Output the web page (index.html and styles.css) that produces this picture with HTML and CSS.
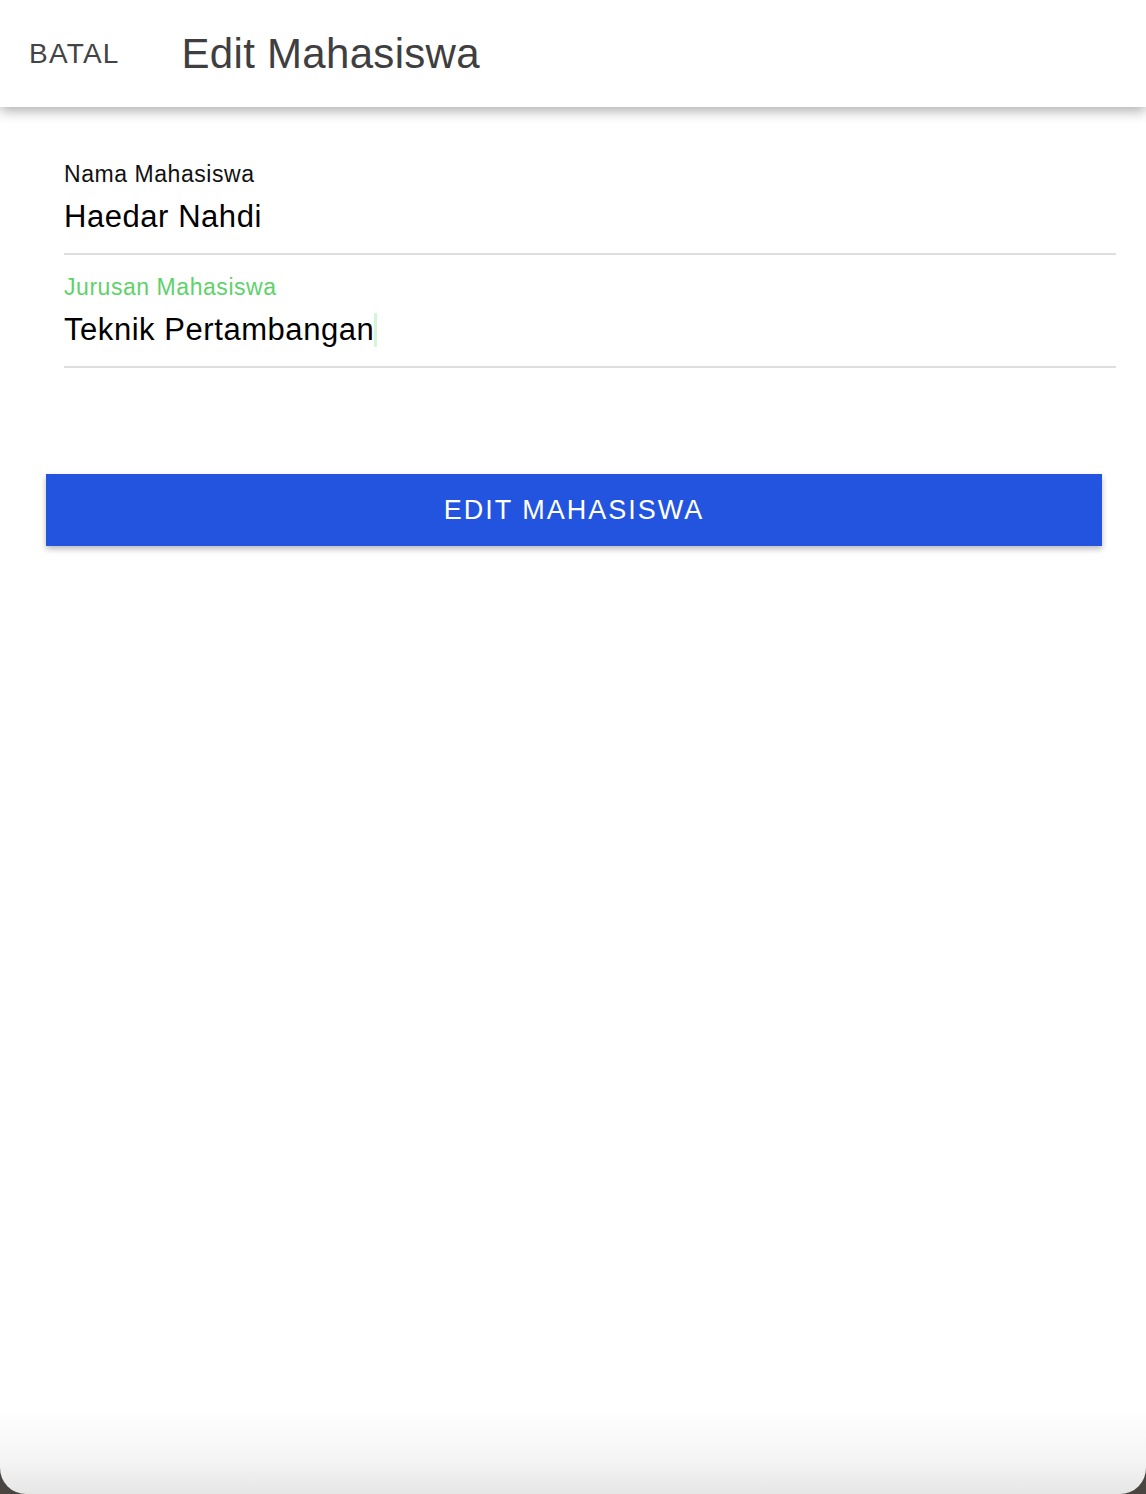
FILE: index.html
```html
<!DOCTYPE html>
<html lang="id">
<head>
<meta charset="utf-8">
<title>Edit Mahasiswa</title>
<link rel="stylesheet" href="styles.css">
</head>
<body>
<div class="screen">
  <header class="topbar">
    <span class="cancel">BATAL</span>
    <h1 class="title">Edit Mahasiswa</h1>
  </header>
  <main class="form">
    <div class="field">
      <div class="label">Nama Mahasiswa</div>
      <div class="value">Haedar Nahdi</div>
    </div>
    <div class="field">
      <div class="label label-active">Jurusan Mahasiswa</div>
      <div class="value">Teknik Pertambangan<span class="cursor"></span></div>
    </div>
  </main>
  <div class="actions">
    <button class="btn">EDIT MAHASISWA</button>
  </div>
  <div class="spacer"></div>
</div>
</body>
</html>
```
FILE: styles.css
```css
html, body {
  margin: 0;
  padding: 0;
  background: #4a4540;
}
body {
  font-family: "Liberation Sans", Arial, sans-serif;
}
.screen {
  width: 1146px;
  height: 1494px;
  background: linear-gradient(to bottom, #ffffff 0, #ffffff 1410px, #f4f4f4 1460px, #e6e6e6 1494px);
  border-radius: 0 0 26px 26px;
  overflow: hidden;
  display: flex;
  flex-direction: column;
}
.topbar {
  height: 107px;
  flex: 0 0 107px;
  display: flex;
  align-items: center;
  padding-left: 29px;
  background: #fff;
  box-shadow: 0 4px 12px rgba(0, 0, 0, 0.32);
  position: relative;
  z-index: 1;
}
.cancel {
  font-size: 28px;
  letter-spacing: 1.2px;
  color: #444;
}
.title {
  margin: 0 0 0 62px;
  font-size: 42px;
  letter-spacing: 0.3px;
  font-weight: normal;
  color: #3f3f3f;
}
.form {
  padding: 53px 30px 0 64px;
}
.field {
  border-bottom: 2px solid #dedede;
  padding-bottom: 18px;
  margin-bottom: 18px;
}
.label {
  font-size: 23px;
  letter-spacing: 0.55px;
  line-height: 28px;
  color: #111;
  margin-bottom: 10px;
}
.label-active {
  color: #5fd16b;
}
.value {
  font-size: 31px;
  letter-spacing: 0.55px;
  line-height: 36px;
  color: #000;
  padding-top: 1px;
}
.cursor {
  display: inline-block;
  width: 3px;
  height: 34px;
  background: #d5f4d8;
  vertical-align: -7px;
  margin-left: 0;
}
.actions {
  padding: 88px 44px 0 46px;
}
.btn {
  display: block;
  width: 100%;
  height: 72px;
  border: none;
  border-radius: 0;
  background: #2354e0;
  color: #fff;
  font-family: "Liberation Sans", Arial, sans-serif;
  font-size: 27px;
  letter-spacing: 2px;
  box-shadow: 0 3px 6px rgba(0, 0, 0, 0.28);
  padding: 0;
}
.spacer {
  flex: 1;
}
```
